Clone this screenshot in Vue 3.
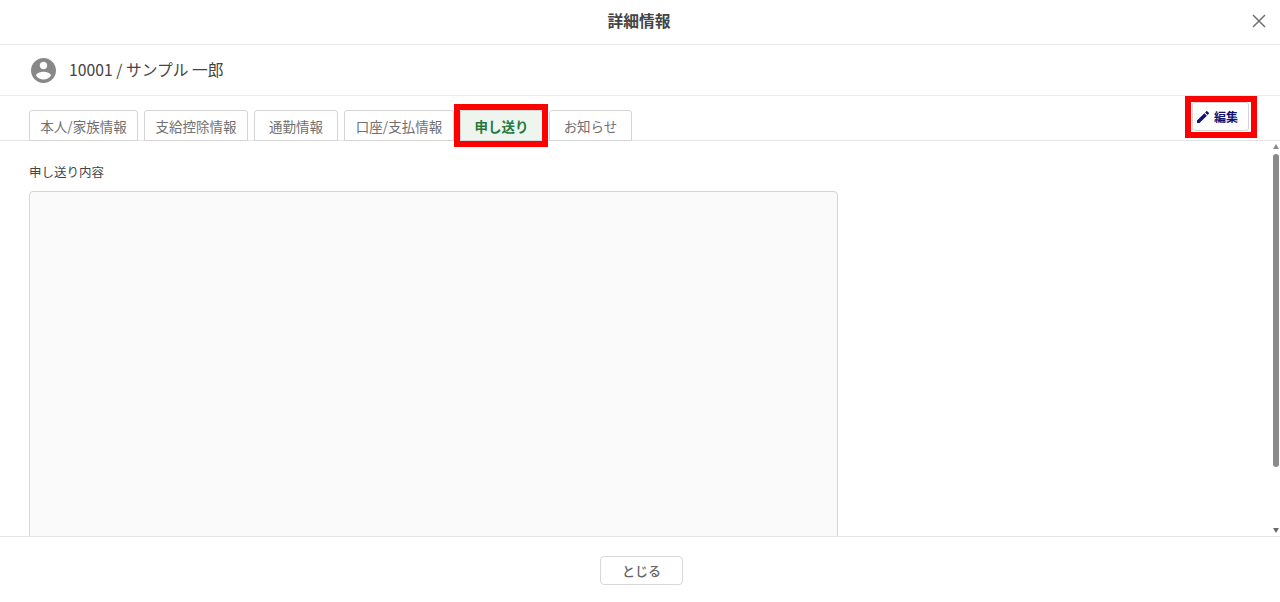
<script setup>
const tabs = [
  { label: '本人/家族情報', width: 109 },
  { label: '支給控除情報', width: 104 },
  { label: '通勤情報', width: 84 },
  { label: '口座/支払情報', width: 110 },
  { label: '申し送り', width: 83, active: true },
  { label: 'お知らせ', width: 83 },
]
</script>

<template>
  <div class="dialog">
    <header class="title-bar">
      <h1 class="title">詳細情報</h1>
      <button class="close" aria-label="閉じる">
        <svg width="14" height="14" viewBox="0 0 14 14">
          <path d="M1 1 L13 13 M13 1 L1 13" stroke="#707070" stroke-width="1.5" fill="none" />
        </svg>
      </button>
    </header>

    <div class="employee">
      <svg class="avatar" width="25" height="25" viewBox="2 2 20 20">
        <path fill="#888888" d="M12 2C6.48 2 2 6.48 2 12s4.48 10 10 10 10-4.48 10-10S17.52 2 12 2zm0 3c1.66 0 3 1.34 3 3s-1.34 3-3 3-3-1.34-3-3 1.34-3 3-3zm0 14.2c-2.5 0-4.71-1.28-6-3.22.03-1.99 4-3.08 6-3.08 1.99 0 5.97 1.09 6 3.08-1.29 1.94-3.5 3.22-6 3.22z" />
      </svg>
      <span class="employee-name">10001 / サンプル 一郎</span>
    </div>

    <div class="tab-bar">
      <nav class="tabs">
        <button
          v-for="tab in tabs"
          :key="tab.label"
          class="tab"
          :class="{ active: tab.active }"
          :style="{ width: tab.width + 'px' }"
        >{{ tab.label }}</button>
      </nav>
      <button class="edit">
        <svg width="12" height="12" viewBox="3 3 18 18">
          <path fill="#14146e" d="M3 17.25V21h3.75L17.81 9.94l-3.75-3.75L3 17.25zM20.71 7.04a1 1 0 0 0 0-1.41l-2.34-2.34a1 1 0 0 0-1.41 0l-1.83 1.83 3.75 3.75 1.83-1.83z" />
        </svg>
        編集
      </button>
    </div>

    <div class="body">
      <main class="content">
        <label class="field-label">申し送り内容</label>
        <div class="memo"></div>
      </main>
      <div class="scrollbar">
        <span class="arrow up"></span>
        <span class="track"><span class="thumb"></span></span>
        <span class="arrow down"></span>
      </div>
    </div>

    <footer class="footer">
      <button class="close-btn">とじる</button>
    </footer>
  </div>
</template>

<style>
html, body {
  margin: 0;
  background: #fff;
}
</style>

<style scoped>
.dialog {
  display: flex;
  flex-direction: column;
  width: 1280px;
  height: 602px;
  overflow: hidden;
  font-family: "Noto Sans CJK JP", "Noto Sans", sans-serif;
  color: #333;
}
button {
  font-family: inherit;
  background: #fff;
  cursor: pointer;
}
.title-bar {
  display: flex;
  align-items: center;
  justify-content: center;
  flex: none;
  height: 41px;
  padding: 0 2px 3px 0;
  border-bottom: 1px solid #e8e8e8;
  position: relative;
}
.title {
  margin: 0;
  font-size: 15.75px;
  font-weight: 700;
  color: #444;
}
.close {
  position: absolute;
  right: 14px;
  top: 14px;
  display: flex;
  padding: 0;
  border: 0;
  background: none;
}
.employee {
  display: flex;
  align-items: center;
  gap: 13px;
  flex: none;
  height: 50px;
  padding-left: 31px;
  border-bottom: 1px solid #ececec;
}
.employee-name {
  font-size: 15.75px;
  line-height: 24px;
  margin-top: -1px;
  color: #444;
}
.tab-bar {
  display: flex;
  justify-content: space-between;
  align-items: flex-start;
  flex: none;
  height: 45px;
  box-sizing: border-box;
  padding: 0 31px 0 29px;
  border-bottom: 1px solid #e5e5e5;
}
.tabs {
  display: flex;
  gap: 6px;
  margin-top: 14px;
}
.tab {
  height: 31px;
  padding: 0;
  box-sizing: border-box;
  border: 1px solid #d5d5d5;
  border-radius: 3px 3px 0 0;
  font-size: 13.5px;
  color: #707070;
  white-space: nowrap;
}
.tab.active {
  position: relative;
  background: #edf5ee;
  color: #27793a;
  font-weight: 700;
}
/* red annotation frames from the manual */
.tab.active::after,
.edit::after {
  content: "";
  position: absolute;
  border: 6px solid #ff0000;
  pointer-events: none;
}
.tab.active::after {
  inset: -7px -6px -7px -7px;
}
.edit::after {
  inset: -7px -9px -8px -8px;
}
.edit {
  position: relative;
  display: flex;
  align-items: center;
  gap: 5px;
  width: 57px;
  height: 29px;
  margin-top: 6px;
  padding: 0 0 0 4px;
  box-sizing: border-box;
  border: 1px solid #d5d5d5;
  border-radius: 3px;
  font-size: 12px;
  font-weight: 700;
  color: #14146e;
}
.body {
  display: flex;
  flex: 1;
  min-height: 0;
}
.content {
  flex: 1;
  padding: 22px 0 0 29px;
  overflow: hidden;
}
.field-label {
  display: block;
  font-size: 12.5px;
  line-height: 18px;
  color: #444;
}
.memo {
  width: 809px;
  height: 400px;
  margin-top: 10px;
  box-sizing: border-box;
  background: #fafafa;
  border: 1px solid #d5d5d5;
  border-radius: 4px;
}
.scrollbar {
  display: flex;
  flex-direction: column;
  align-items: center;
  width: 6px;
  margin-right: 1px;
  padding: 3px 0 3px;
  box-sizing: border-box;
}
.arrow {
  flex: none;
  width: 0;
  height: 0;
  border-left: 3.5px solid transparent;
  border-right: 3.5px solid transparent;
}
.arrow.up {
  border-bottom: 5px solid #8a8a8a;
}
.arrow.down {
  border-top: 5px solid #6a6a6a;
}
.track {
  flex: 1;
  width: 100%;
  padding-top: 5px;
}
.thumb {
  display: block;
  width: 100%;
  height: 313px;
  border-radius: 3px;
  background: #8a8a8a;
}
.footer {
  display: flex;
  justify-content: center;
  align-items: flex-start;
  flex: none;
  height: 66px;
  box-sizing: border-box;
  padding: 19px 0 0 3px;
  border-top: 1px solid #e5e5e5;
  background: #fff;
}
.close-btn {
  width: 83px;
  height: 29px;
  padding: 0;
  box-sizing: border-box;
  border: 1.5px solid #d8d8d8;
  border-radius: 4px;
  font-size: 13px;
  font-weight: 500;
  color: #666;
}
</style>
